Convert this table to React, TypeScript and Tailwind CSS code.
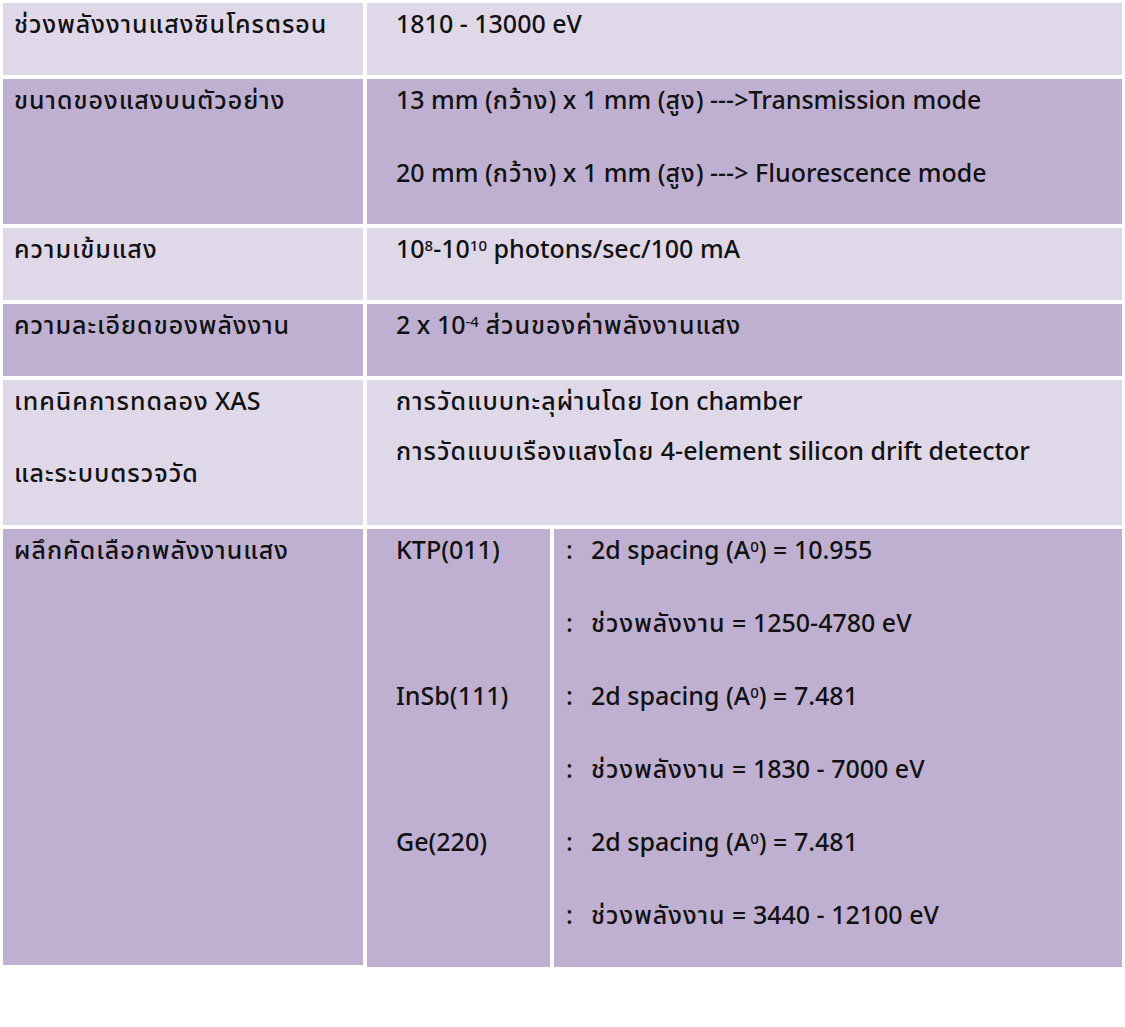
import React from "react";

const font = {
  fontFamily:
    '"Noto Sans Thai", "Noto Sans Thai Looped", Loma, Garuda, Kinnari, "Noto Sans", "DejaVu Sans", sans-serif',
};

type Row = { label: React.ReactNode; value: React.ReactNode; tone: "light" | "dark" };

const Line = ({ children }: { children: React.ReactNode }) => (
  <div className="leading-[44px] whitespace-nowrap">{children}</div>
);

// Thai runs are set a touch wider to match the original face
const T = ({ children }: { children: React.ReactNode }) => (
  <span className="tracking-[1px]">{children}</span>
);

const Sup = ({ children }: { children: React.ReactNode }) => (
  <sup className="text-[15px]">{children}</sup>
);

const rows: Row[] = [
  {
    label: (
      <Line>
        <T>ช่วงพลังงานแสงซินโครตรอน</T>
      </Line>
    ),
    value: <Line>1810 - 13000 eV</Line>,
    tone: "light",
  },
  {
    label: (
      <Line>
        <T>ขนาดของแสงบนตัวอย่าง</T>
      </Line>
    ),
    value: (
      <div className="flex flex-col gap-[29px]">
        <Line>
          13 mm (<T>กว้าง</T>) x 1 mm (<T>สูง</T>) ---&gt;Transmission mode
        </Line>
        <Line>
          20 mm (<T>กว้าง</T>) x 1 mm (<T>สูง</T>) ---&gt; Fluorescence mode
        </Line>
      </div>
    ),
    tone: "dark",
  },
  {
    label: (
      <Line>
        <T>ความเข้มแสง</T>
      </Line>
    ),
    value: (
      <Line>
        10<Sup>8</Sup>-10<Sup>10</Sup> photons/sec/100 mA
      </Line>
    ),
    tone: "light",
  },
  {
    label: (
      <Line>
        <T>ความละเอียดของพลังงาน</T>
      </Line>
    ),
    value: (
      <Line>
        2 x 10<Sup>-4</Sup> <T>ส่วนของค่าพลังงานแสง</T>
      </Line>
    ),
    tone: "dark",
  },
  {
    label: (
      <div className="flex flex-col gap-[28px]">
        <Line>
          <T>เทคนิคการทดลอง</T> XAS
        </Line>
        <Line>
          <T>และระบบตรวจวัด</T>
        </Line>
      </div>
    ),
    value: (
      <div className="flex flex-col gap-[6px]">
        <Line>
          <T>การวัดแบบทะลุผ่านโดย</T> Ion chamber
        </Line>
        <Line>
          <T>การวัดแบบเรืองแสงโดย</T> 4-element silicon drift detector
        </Line>
      </div>
    ),
    tone: "light",
  },
];

const crystals = [
  { name: "KTP(011)", spacing: "10.955", range: "1250-4780 eV" },
  { name: "InSb(111)", spacing: "7.481", range: "1830 - 7000 eV" },
  { name: "Ge(220)", spacing: "7.481", range: "3440 - 12100 eV" },
];

export default function App() {
  return (
    <div className="min-h-screen bg-white p-[3px] text-[25px] font-medium text-[#111]" style={font}>
      <div className="grid w-[1119px] grid-cols-[360px_183px_568px] gap-[4px]">
        {rows.map((r, i) => (
          <React.Fragment key={i}>
            <div
              className={`pl-[11px] ${r.tone === "light" ? "bg-[#dfd8e8]" : "bg-[#bfb0d1]"} ${
                i === 1 || i === 4 ? "h-[145px]" : "h-[72px]"
              }`}
            >
              {r.label}
            </div>
            <div
              className={`col-span-2 pl-[29px] ${r.tone === "light" ? "bg-[#dfd8e8]" : "bg-[#bfb0d1]"}`}
            >
              {r.value}
            </div>
          </React.Fragment>
        ))}

        {/* crystal row */}
        <div className="h-[436px] bg-[#bfb0d1] pl-[11px]">
          <Line>
            <T>ผลึกคัดเลือกพลังงานแสง</T>
          </Line>
        </div>
        <div className="flex flex-col bg-[#bfb0d1] pl-[29px]">
          {crystals.map((c) => (
            <div key={c.name} className="h-[146px]">
              <Line>{c.name}</Line>
            </div>
          ))}
        </div>
        <div className="flex flex-col bg-[#bfb0d1] pl-[12px]">
          {crystals.map((c) => (
            <React.Fragment key={c.name}>
              <div className="flex h-[73px]">
                <span className="w-[25px] leading-[44px]">:</span>
                <Line>
                  2d spacing (A<Sup>0</Sup>) = {c.spacing}
                </Line>
              </div>
              <div className="flex h-[73px]">
                <span className="w-[25px] leading-[44px]">:</span>
                <Line>
                  <T>ช่วงพลังงาน</T> = {c.range}
                </Line>
              </div>
            </React.Fragment>
          ))}
        </div>
      </div>
    </div>
  );
}
